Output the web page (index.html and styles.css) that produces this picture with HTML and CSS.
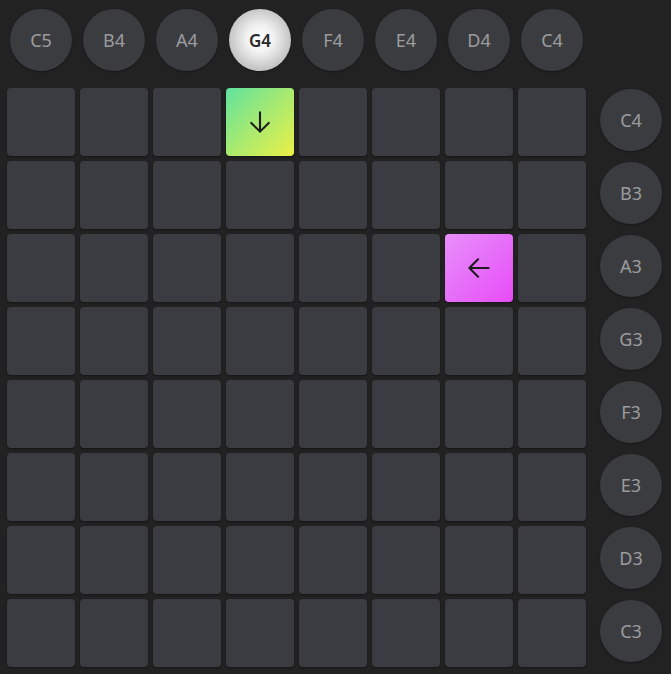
FILE: index.html
```html
<!DOCTYPE html>
<html>
<head>
<meta charset="utf-8">
<link rel="stylesheet" href="styles.css">
</head>
<body>
<div class="app">
  <div class="top-row">
    <div class="note">C5</div>
    <div class="note">B4</div>
    <div class="note">A4</div>
    <div class="note active">G4</div>
    <div class="note">F4</div>
    <div class="note">E4</div>
    <div class="note">D4</div>
    <div class="note">C4</div>
  </div>
  <div class="main">
    <div class="grid">
      <div class="pad"></div><div class="pad"></div><div class="pad"></div>
      <div class="pad green"><svg class="icon" viewBox="0 0 24 24" width="24" height="24"><path d="M12 1.5v21M2.5 13L12 22.5 21.5 13" fill="none" stroke="#1c1c1c" stroke-width="2.3" stroke-linecap="round" stroke-linejoin="round"/></svg></div>
      <div class="pad"></div><div class="pad"></div><div class="pad"></div><div class="pad"></div>

      <div class="pad"></div><div class="pad"></div><div class="pad"></div><div class="pad"></div><div class="pad"></div><div class="pad"></div><div class="pad"></div><div class="pad"></div>

      <div class="pad"></div><div class="pad"></div><div class="pad"></div><div class="pad"></div><div class="pad"></div><div class="pad"></div>
      <div class="pad pink"><svg class="icon" viewBox="0 0 24 24" width="24" height="24"><path d="M22.5 12h-21M11 2.5L1.5 12 11 21.5" fill="none" stroke="#1c1c1c" stroke-width="2.3" stroke-linecap="round" stroke-linejoin="round"/></svg></div>
      <div class="pad"></div>

      <div class="pad"></div><div class="pad"></div><div class="pad"></div><div class="pad"></div><div class="pad"></div><div class="pad"></div><div class="pad"></div><div class="pad"></div>
      <div class="pad"></div><div class="pad"></div><div class="pad"></div><div class="pad"></div><div class="pad"></div><div class="pad"></div><div class="pad"></div><div class="pad"></div>
      <div class="pad"></div><div class="pad"></div><div class="pad"></div><div class="pad"></div><div class="pad"></div><div class="pad"></div><div class="pad"></div><div class="pad"></div>
      <div class="pad"></div><div class="pad"></div><div class="pad"></div><div class="pad"></div><div class="pad"></div><div class="pad"></div><div class="pad"></div><div class="pad"></div>
      <div class="pad"></div><div class="pad"></div><div class="pad"></div><div class="pad"></div><div class="pad"></div><div class="pad"></div><div class="pad"></div><div class="pad"></div>
    </div>
    <div class="side-col">
      <div class="note">C4</div>
      <div class="note">B3</div>
      <div class="note">A3</div>
      <div class="note">G3</div>
      <div class="note">F3</div>
      <div class="note">E3</div>
      <div class="note">D3</div>
      <div class="note">C3</div>
    </div>
  </div>
</div>
</body>
</html>
```
FILE: styles.css
```css
html, body {
  margin: 0;
  padding: 0;
  background: #222222;
  height: 100%;
}
body {
  font-family: "Noto Sans", "Open Sans", sans-serif;
}
.app {
  width: 671px;
  height: 674px;
  overflow: hidden;
}
.top-row {
  display: flex;
  gap: 11px;
  padding: 9px 0 0 10px;
}
.note {
  width: 62px;
  height: 62px;
  border-radius: 50%;
  background: #3b3c40;
  color: #9c9c9e;
  font-size: 18px;
  display: flex;
  align-items: center;
  justify-content: center;
  flex: none;
  box-shadow: 0 1px 2px rgba(0,0,0,0.35);
}
.note.active {
  background: radial-gradient(circle at 50% 48%, #ffffff 0%, #f2f2f2 30%, #bdbdbd 75%, #9d9d9d 100%);
  color: #2a2a2a;
  font-weight: 600;
  font-size: 17px;
}
.main {
  display: flex;
  margin-top: 17px;
  padding-left: 7px;
}
.grid {
  display: grid;
  grid-template-columns: repeat(8, 68px);
  grid-auto-rows: 68px;
  gap: 5px;
}
.pad {
  background: #3b3c41;
  border-radius: 4px;
  box-shadow: 0 1px 2px rgba(0,0,0,0.4);
  display: flex;
  align-items: center;
  justify-content: center;
}
.icon {
  width: 22px;
  height: 22px;
}
.pad.green {
  background: linear-gradient(135deg, #5ee39e 0%, #a8ea70 50%, #ebf046 100%);
}
.pad.pink {
  background: linear-gradient(135deg, #e88ffa 0%, #e66ff9 50%, #e84bf7 100%);
}
.side-col {
  display: flex;
  flex-direction: column;
  gap: 11px;
  margin-left: 14px;
  padding-top: 1px;
}
```
